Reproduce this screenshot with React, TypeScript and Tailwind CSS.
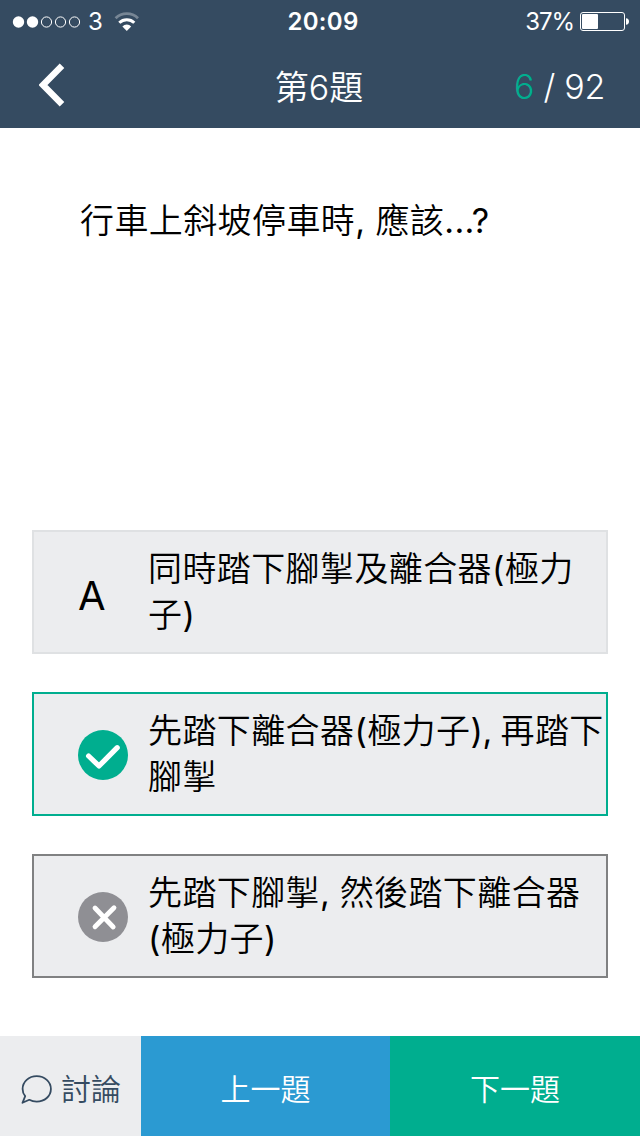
import React from "react";

type Status = "neutral" | "correct" | "wrong";

type Answer = {
  label: string;
  lines: string[];
  status: Status;
};

const answers: Answer[] = [
  { label: "A", lines: ["同時踏下腳掣及離合器(極力", "子)"], status: "neutral" },
  { label: "B", lines: ["先踏下離合器(極力子), 再踏下", "腳掣"], status: "correct" },
  { label: "C", lines: ["先踏下腳掣, 然後踏下離合器", "(極力子)"], status: "wrong" },
];

const borders: Record<Status, string> = {
  neutral: "border-[#dfe1e3]",
  correct: "border-[#00ae8f]",
  wrong: "border-[#808182]",
};

// Chinese characters are set in the DemiLight cut, Latin letters and punctuation in Regular.
function MixedText({ text }: { text: string }) {
  return (
    <>
      {text.split(/([\x20-\x7e]+)/).map((part, index) =>
        index % 2 === 1 ? (
          <span key={index} className={part.startsWith(")") ? "font-normal tracking-[-0.4px]" : "font-normal"}>
            {part}
          </span>
        ) : (
          part
        ),
      )}
    </>
  );
}

function StatusBar() {
  return (
    <div className="grid h-10 grid-cols-3 items-center text-[24px] leading-10">
      <div className="flex h-10 items-center pt-[1px] pl-[12px]">
        <svg width="70" height="14" viewBox="0 0 70 14" fill="none" stroke="white">
          <circle cx="6.5" cy="7" r="5.7" fill="white" stroke="none" />
          <circle cx="20.5" cy="7" r="5.7" fill="white" stroke="none" />
          <circle cx="34.5" cy="7" r="5.1" />
          <circle cx="48.5" cy="7" r="5.1" />
          <circle cx="62.5" cy="7" r="5.1" />
        </svg>
        <span className="ml-[6px]">3</span>
        <svg className="ml-[11px]" width="26" height="20" viewBox="0 0 26 20" fill="none" stroke="white">
          <path d="M1.6 6.2 A16 16 0 0 1 24 6.2" strokeWidth="2.8" opacity=".33" />
          <path d="M5.3 10.8 A10.7 10.7 0 0 1 20.3 10.8" strokeWidth="3" />
          <path d="M12.8 18.9 L8.4 14.5 A5.9 5.9 0 0 1 17.2 14.5 Z" fill="white" stroke="none" />
        </svg>
      </div>
      <div className="pt-[2px] pl-[6px] text-center font-semibold tracking-[0.3px]">20:09</div>
      <div className="flex h-10 items-center justify-end pr-[10px]">
        <span className="pt-[1px] tracking-[-1.1px]">37%</span>
        <svg className="ml-[6px]" width="50" height="20" viewBox="0 0 50 20" fill="none">
          <rect x="0.5" y="1.5" width="44" height="18" rx="2.5" stroke="white" />
          <rect x="2" y="3" width="16" height="15" rx="1" fill="white" />
          <path d="M46 7.2 q3 .2 3 3.3 t-3 3.3 Z" fill="white" />
        </svg>
      </div>
    </div>
  );
}

function Marker({ answer }: { answer: Answer }) {
  if (answer.status === "neutral") {
    return <span className="pt-[3px] text-[40px] leading-[50px]">{answer.label}</span>;
  }
  return (
    <svg width="50" height="50" viewBox="0 0 50 50" fill="none" stroke="white" strokeLinecap="round">
      <circle cx="25" cy="25" r="25" stroke="none" fill={answer.status === "correct" ? "#00ae8f" : "#8f8f94"} />
      {answer.status === "correct" ? (
        <path d="M10.6 26 L21 36 L39.2 17.7" strokeWidth="5.2" strokeLinejoin="round" />
      ) : (
        <path d="M17 16 L35.2 35 M36 15.8 L17 34.8" strokeWidth="4.8" />
      )}
    </svg>
  );
}

export default function App() {
  return (
    <main className="flex h-[1136px] w-[640px] flex-col bg-white font-['Inter','Noto_Sans_CJK_TC',sans-serif] text-black">
      <header className="h-32 bg-[#354b61] text-white">
        <StatusBar />
        <div className="grid h-[88px] grid-cols-3 items-center text-[34px]">
          <button className="pt-[2px] pl-[39px]" aria-label="返回">
            <svg width="28" height="44" viewBox="0 0 28 44" fill="none" stroke="white" strokeWidth="6.4">
              <path d="M23 2.8 L4 22 L23 41.2" />
            </svg>
          </button>
          <h1 className="pt-[6px] pr-[2px] text-center font-[350]">第6題</h1>
          <div className="pt-[4px] pr-[35px] text-right font-[350] tracking-[-0.3px]">
            <span className="text-[#00ae8f]">6</span> / 92
          </div>
        </div>
      </header>

      <section className="h-[402px] pt-[70px] pl-[80px] text-[34px] leading-[46px] font-[350] tracking-[0.4px]">
        <MixedText text="行車上斜坡停車時, 應該...?" />
      </section>

      <section className="flex flex-col gap-[38px] px-8">
        {answers.map((answer) => (
          <button
            key={answer.label}
            className={`flex h-[124px] items-start border-2 bg-[#ecedef] text-left ${borders[answer.status]}`}
          >
            <div className="flex w-[114px] shrink-0 pt-[36px] pl-[44px]">
              <Marker answer={answer} />
            </div>
            <div className="pt-[14px] text-[34px] leading-[46px] font-[350] tracking-[0.4px] [word-spacing:-0.5px] whitespace-nowrap">
              {answer.lines.map((line) => (
                <div key={line}>
                  <MixedText text={line} />
                </div>
              ))}
            </div>
          </button>
        ))}
      </section>

      <nav className="mt-auto flex h-[100px] text-[30px] font-[350] text-white">
        <button className="flex w-[141px] items-center bg-[#ecedef] pt-[7px] pl-[20px] text-[#354b61]">
          <svg width="34" height="34" viewBox="0 0 34 34" fill="none" stroke="currentColor" strokeWidth="1.8">
            <path
              d="M5.2 23.2 C3.2 21 2.6 18.7 2.6 16 C2.6 8.8 8.8 3.2 16.7 3.2 S30.9 8.8 30.9 16 S24.6 28.6 16.7 28.6 C14 28.6 11.5 28 9.3 26.8 L2.5 29.8 Z"
              strokeLinejoin="round"
            />
          </svg>
          <span className="ml-[7px]">討論</span>
        </button>
        <button className="w-[249px] bg-[#2b9ad2] pt-[7px]">上一題</button>
        <button className="w-[250px] bg-[#00ae8f] pt-[7px]">下一題</button>
      </nav>
    </main>
  );
}
